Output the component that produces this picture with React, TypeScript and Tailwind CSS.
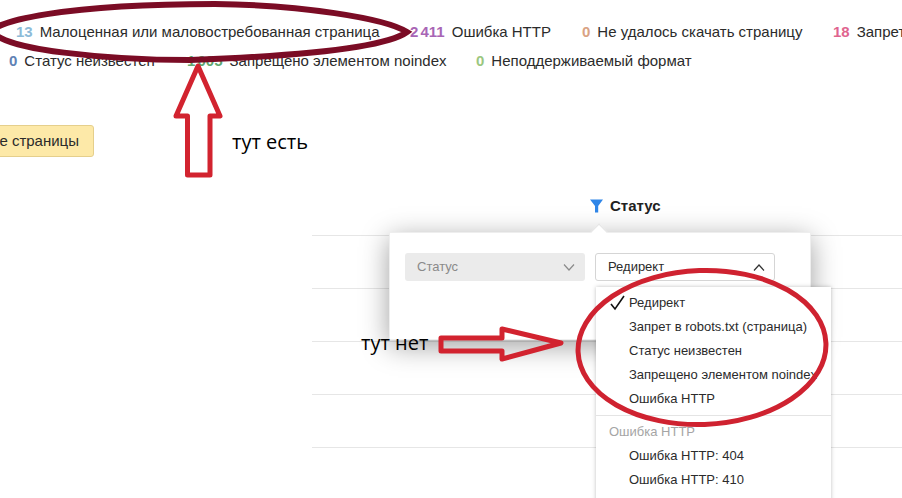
const tableRows = [235, 288, 341, 394, 447];

const counters = [
  [
    { value: '13', label: 'Малоценная или маловостребованная страница', color: 'text-[#8dbbd8]', width: 'w-[394px]' },
    { value: '2 411', label: 'Ошибка HTTP', color: 'text-[#a865b5]', width: 'w-[172px]' },
    { value: '0', label: 'Не удалось скачать страницу', color: 'text-[#d9a283]', width: 'w-[251px]' },
    { value: '18', label: 'Запрет в robots.txt (страница)', color: 'text-[#e0648f]', width: 'w-[220px]' },
  ],
  [
    { value: '0', label: 'Статус неизвестен', color: 'text-[#5f82b5]', width: 'w-[178px]' },
    { value: '1 005', label: 'Запрещено элементом noindex', color: 'text-[#5fa870]', width: 'w-[289px]' },
    { value: '0', label: 'Неподдерживаемый формат', color: 'text-[#9bc77f]', width: 'w-[220px]' },
  ],
];

const options = ['Редирект', 'Запрет в robots.txt (страница)', 'Статус неизвестен', 'Запрещено элементом noindex', 'Ошибка HTTP'];

const Chevron = ({ up, color }: { up?: boolean; color: string }) => (
  <svg width="12" height="7" viewBox="0 0 12 7" fill="none" stroke={color} strokeWidth="1.2">
    <path d={up ? 'M1 6.5 6 1l5 5.5' : 'M1 .5 6 6l5-5.5'} />
  </svg>
);

const App = () => {
  return (
    <div className="relative w-[902px] h-[498px] overflow-hidden bg-white font-['Liberation_Sans',Arial,sans-serif] text-[15px] text-[#2b2b2b]">
      {/* Counters */}
      <div className="pt-[22px] flex flex-col gap-[9px] whitespace-nowrap">
        {counters.map((row, i) => (
          <div key={i} className={`flex h-[20px] items-center ${i === 0 ? 'pl-[16px]' : 'pl-[9px]'}`}>
            {row.map((item) => (
              <div key={item.label} className={`flex shrink-0 gap-[7px] ${item.width}`}>
                <span className={`font-bold [word-spacing:-2px] ${item.color}`}>{item.value}</span>
                <span>{item.label}</span>
              </div>
            ))}
          </div>
        ))}
      </div>

      {/* Button cut off by the screenshot */}
      <div className="mt-[54px] w-[94px] h-[32px] flex justify-end overflow-hidden">
        <div className="shrink-0 h-full px-[14px] flex items-center rounded-[3px] border border-[#e5cf8c] bg-[#fde9a8] whitespace-nowrap">
          Все страницы
        </div>
      </div>

      {/* Column header */}
      <div className="mt-[38px] ml-[590px] flex items-center gap-[7px] font-bold text-[#222]">
        <svg width="13" height="14" viewBox="0 0 13 14" fill="#2f86e8">
          <path d="M0 0.5h13L8.2 7v6.5H5V7z" />
        </svg>
        Статус
      </div>

      {/* Table lines */}
      {tableRows.map((top) => (
        <div key={top} className="absolute left-[312px] right-0 h-px bg-[#e6e6e6]" style={{ top }} />
      ))}

      {/* Filter popover */}
      <div className="absolute left-[389px] top-[232px] w-[422px] h-[108px] bg-white shadow-[0_6px_26px_rgba(0,0,0,0.38)] border border-[#eee] p-[20px_15px]">
        <div className="absolute left-[203px] -top-[7px] w-[12px] h-[12px] rotate-45 bg-white border-l border-t border-[#e4e4e4]" />
        <div className="flex gap-[10px] text-[13px]">
          <div className="w-[180px] h-[28px] rounded-[3px] bg-[#ebebeb] flex items-center justify-between pl-[12px] pr-[10px] text-[#8a8a8a]">
            Статус
            <Chevron color="#8a8a8a" />
          </div>
          <div className="w-[180px] h-[28px] rounded-[3px] border border-[#d5d5d5] bg-white flex items-center justify-between pl-[12px] pr-[9px]">
            Редирект
            <Chevron up color="#333" />
          </div>
        </div>
      </div>

      {/* Dropdown list */}
      <div className="absolute left-[596px] top-[287px] w-[235px] h-[230px] bg-white shadow-[0_0_4px_rgba(0,0,0,0.25)] pt-[4px] text-[13px]">
        {options.map((option, i) => (
          <div key={option} className="relative h-[24px] pl-[33px] flex items-center whitespace-nowrap">
            {i === 0 && (
              <svg className="absolute left-[14px] top-[4px]" width="16" height="16" viewBox="0 0 16 16" fill="none" stroke="#111" strokeWidth="1.6">
                <path d="M1 9l4 5L14 1" />
              </svg>
            )}
            {option}
          </div>
        ))}
        <div className="mt-[4px] h-px bg-[#e4e4e4]" />
        <div className="mt-[4px] h-[24px] pl-[13px] flex items-center text-[#a5a5a5]">Ошибка HTTP</div>
        <div className="h-[24px] pl-[33px] flex items-center">Ошибка HTTP: 404</div>
        <div className="h-[24px] pl-[33px] flex items-center">Ошибка HTTP: 410</div>
      </div>

      {/* Hand-drawn annotations */}
      <svg className="absolute inset-0 pointer-events-none" width="902" height="498" fill="none">
        <path d="M-7 31C-4 22 60 4 215 4 300 5 385 18 407 32 385 48 300 56 190 60 110 60 0 50-7 31Z" stroke="#7b0c25" strokeWidth="6" />
        <path d="M198 66 220 116H210V175H187.500V116H176Z" stroke="#d2232f" strokeWidth="5" strokeLinejoin="round" />
        <path d="M441 338H502V329L561 343 502 359V351H441Z" stroke="#d2232f" strokeWidth="5" strokeLinejoin="round" />
        <ellipse cx="702" cy="347.500" rx="124" ry="77" stroke="#cf2230" strokeWidth="5" transform="rotate(-2 702 347.500)" />
      </svg>
      <div className="absolute left-[232px] top-[127px] text-[20px] text-black font-['Open_Sans',sans-serif]">тут есть</div>
      <div className="absolute left-[361px] top-[328px] text-[20px] text-black font-['Open_Sans',sans-serif]">тут нет</div>
    </div>
  );
};

export default App;
